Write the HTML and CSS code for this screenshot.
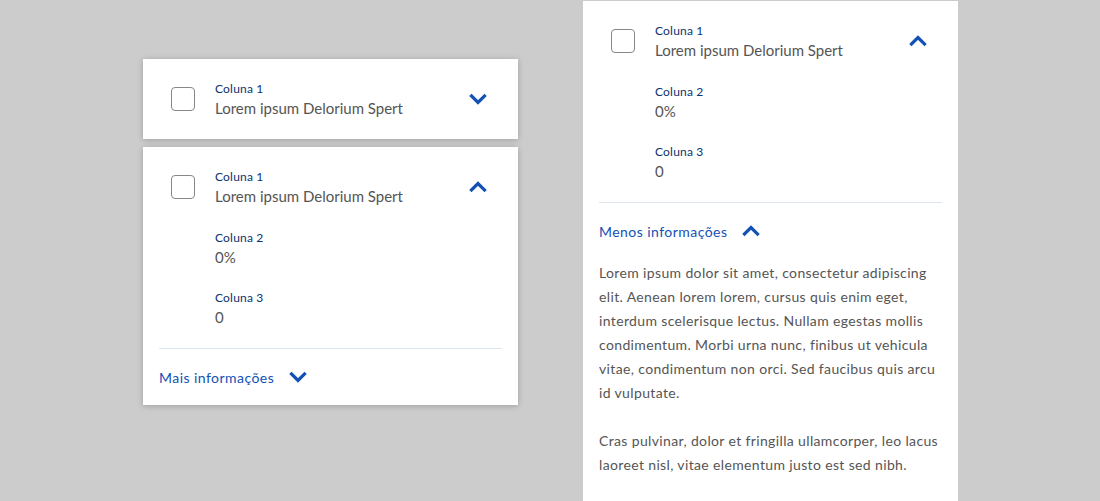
FILE: index.html
```html
<!DOCTYPE html>
<html lang="pt-BR">
<head>
<meta charset="utf-8">
<title>Cards</title>
<link rel="stylesheet" href="styles.css">
</head>
<body>
<div class="page">
  <div class="left-col">
    <div class="card">
      <div class="card-head">
        <span class="check"></span>
        <div class="field">
          <div class="label">Coluna 1</div>
          <div class="value">Lorem ipsum Delorium Spert</div>
        </div>
        <svg class="chev" viewBox="0 0 24 24"><polyline points="5.5,9 12,15.5 18.5,9"/></svg>
      </div>
    </div>
    <div class="card">
      <div class="card-head">
        <span class="check"></span>
        <div class="field">
          <div class="label">Coluna 1</div>
          <div class="value">Lorem ipsum Delorium Spert</div>
        </div>
        <svg class="chev" viewBox="0 0 24 24"><polyline points="5.5,15 12,8.5 18.5,15"/></svg>
      </div>
      <div class="rows">
        <div class="field">
          <div class="label">Coluna 2</div>
          <div class="value">0%</div>
        </div>
        <div class="field">
          <div class="label">Coluna 3</div>
          <div class="value">0</div>
        </div>
      </div>
      <div class="divider"></div>
      <div class="card-foot">
        <span class="more">Mais informações</span>
        <svg class="chev" viewBox="0 0 24 24"><polyline points="5.5,9 12,15.5 18.5,9"/></svg>
      </div>
    </div>
  </div>
  <div class="panel">
    <div class="card-head">
      <span class="check"></span>
      <div class="field">
        <div class="label">Coluna 1</div>
        <div class="value">Lorem ipsum Delorium Spert</div>
      </div>
      <svg class="chev" viewBox="0 0 24 24"><polyline points="5.5,15 12,8.5 18.5,15"/></svg>
    </div>
    <div class="rows">
      <div class="field">
        <div class="label">Coluna 2</div>
        <div class="value">0%</div>
      </div>
      <div class="field">
        <div class="label">Coluna 3</div>
        <div class="value">0</div>
      </div>
    </div>
    <div class="divider"></div>
    <div class="card-foot">
      <span class="more">Menos informações</span>
      <svg class="chev" viewBox="0 0 24 24"><polyline points="5.5,15 12,8.5 18.5,15"/></svg>
    </div>
    <div class="text">
      <p>Lorem ipsum dolor sit amet, consectetur adipiscing elit. Aenean lorem lorem, cursus quis enim eget, interdum scelerisque lectus. Nullam egestas mollis condimentum. Morbi urna nunc, finibus ut vehicula vitae, condimentum non orci. Sed faucibus quis arcu id vulputate.</p>
      <p>Cras pulvinar, dolor et fringilla ullamcorper, leo lacus laoreet nisl, vitae elementum justo est sed nibh.</p>
    </div>
  </div>
</div>
</body>
</html>
```

FILE: styles.css
```css
html, body {
  margin: 0;
  padding: 0;
  height: 100%;
  overflow: hidden;
}
body {
  background: #cccccc;
  font-family: Lato, "Open Sans", "Liberation Sans", sans-serif;
  color: #555555;
}
.page {
  display: flex;
  align-items: flex-start;
  padding-left: 143px;
  gap: 65px;
  padding-top: 1px;
}
.left-col {
  width: 375px;
  margin-top: 58px;
  display: flex;
  flex-direction: column;
  gap: 8px;
}
.card {
  background: #ffffff;
  box-shadow: 0 1px 6px rgba(0, 0, 0, 0.22);
}
.panel {
  width: 375px;
  background: #ffffff;
  min-height: 520px;
}
.card-head {
  height: 80px;
  display: flex;
  align-items: center;
  padding: 0 28px;
}
.check {
  width: 22px;
  height: 22px;
  border: 1px solid #888888;
  border-radius: 4px;
  flex: none;
  margin-right: 20px;
}
.card-head .field {
  flex: 1;
}
.label {
  font-size: 12px;
  line-height: 18px;
  color: #0c326f;
  letter-spacing: 0.2px;
}
.value {
  font-size: 15px;
  line-height: 20px;
  color: #555555;
}
.chev {
  width: 24px;
  height: 24px;
  flex: none;
  fill: none;
  stroke: #1351b4;
  stroke-width: 3.2;
  stroke-linecap: square;
  stroke-linejoin: miter;
}
.rows {
  display: flex;
  flex-direction: column;
  gap: 22px;
  padding: 2px 0 21px 72px;
}
.divider {
  height: 1px;
  background: #dde5ef;
  margin: 0 16px;
}
.card-foot {
  height: 56px;
  display: flex;
  align-items: center;
  padding: 0 16px;
  gap: 12px;
}
.more {
  font-size: 14px;
  color: #1351b4;
  letter-spacing: 0.45px;
}
.text {
  padding: 2px 16px 0;
  font-size: 14px;
  line-height: 24px;
  color: #555555;
  letter-spacing: 0.36px;
}
.text p {
  margin: 0 0 24px 0;
}
```
